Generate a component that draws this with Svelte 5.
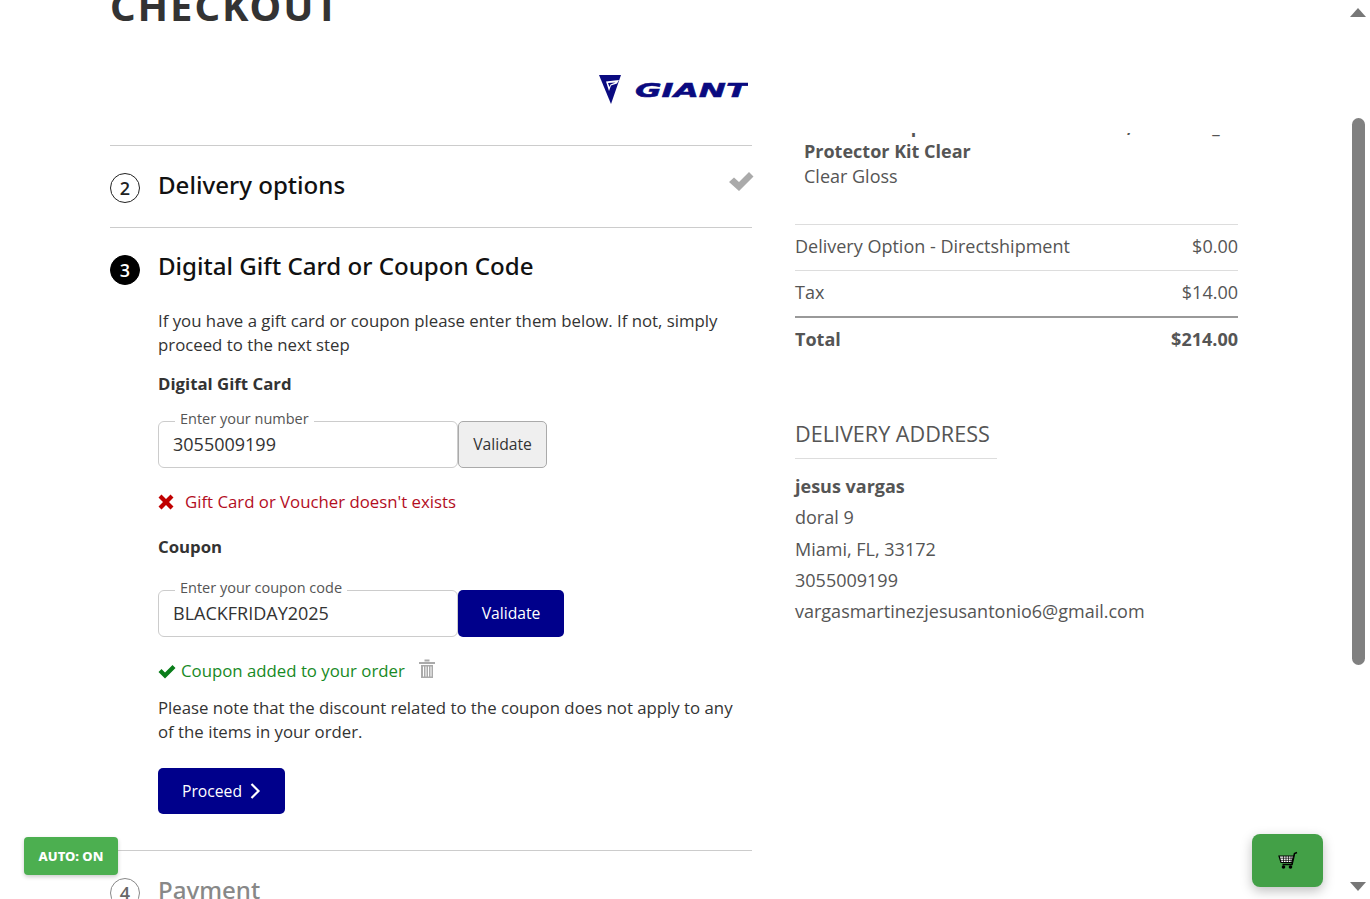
<script>
  let giftNumber = "3055009199";
  let couponCode = "BLACKFRIDAY2025";
</script>

<div class="page">
  <div class="content">
    <h1>CHECKOUT</h1>

    <div class="columns">
      <section class="steps">
        <div class="logo">
          <svg width="150" height="30" viewBox="0 0 150 30">
            <polygon points="1,1 23,1 13,30" fill="#0a0a80" />
            <polygon points="21,6 8,7.500 11,17 13,11.500 19,9.500" fill="#fff" />
            <polygon points="10,9 17.500,8.500 12.500,10.500 11.500,13" fill="#0a0a80" />
            <text x="37" y="23" textLength="113" lengthAdjust="spacingAndGlyphs" class="wordmark">GIANT</text>
          </svg>
        </div>

        <div class="step done">
          <span class="num">2</span>
          <h2>Delivery options</h2>
          <svg class="tick" width="26" height="22" viewBox="0 0 26 22">
            <path d="M1 11l5-4.500 5 4.500L21 1l4.500 4.500L11 20z" fill="#aaa" />
          </svg>
        </div>

        <div class="step-open">
          <div class="step-head">
            <span class="num filled">3</span>
            <h2>Digital Gift Card or Coupon Code</h2>
          </div>
          <div class="step-body">
            <p class="intro">If you have a gift card or coupon please enter them below. If not, simply proceed to the next step</p>

            <h3>Digital Gift Card</h3>
            <div class="field-row">
              <fieldset class="field">
                <legend>Enter your number</legend>
                <input type="text" bind:value={giftNumber} />
              </fieldset>
              <button class="btn-grey">Validate</button>
            </div>
            <div class="msg error">
              <svg width="16" height="16" viewBox="0 0 16 16">
                <path d="M3.500 0.500L8 5 12.500 0.500 15.500 3.500 11 8 15.500 12.500 12.500 15.500 8 11 3.500 15.500 0.500 12.500 5 8 0.500 3.500z" fill="#c00000" />
              </svg>
              <span>Gift Card or Voucher doesn't exists</span>
            </div>

            <h3 class="coupon-title">Coupon</h3>
            <div class="field-row second">
              <fieldset class="field">
                <legend>Enter your coupon code</legend>
                <input type="text" bind:value={couponCode} />
              </fieldset>
              <button class="btn-navy wide">Validate</button>
            </div>
            <div class="msg ok">
              <svg width="18" height="15" viewBox="0 0 18 15">
                <path d="M0.500 8l3-3 3.500 3.500L14.500 1l3 3L7 14.500z" fill="#0a7d1a" />
              </svg>
              <span>Coupon added to your order</span>
              <svg class="trash" width="18" height="22" viewBox="0 0 18 22">
                <path d="M6.500 2.500h5M1 5h16" stroke="#aaa" stroke-width="2" fill="none" />
                <path d="M3 7h12v13H3z" fill="#aaa" />
                <path d="M5.500 8.500v10M8 8.500v10M10.500 8.500v10M13 8.500v10" stroke="#fff" stroke-width="1" />
              </svg>
            </div>
            <p class="note">Please note that the discount related to the coupon does not apply to any of the items in your order.</p>
            <button class="btn-navy proceed">
              Proceed
              <svg width="12" height="18" viewBox="0 0 12 18">
                <path d="M2.500 2l7 7-7 7" stroke="#fff" stroke-width="2.200" fill="none" />
              </svg>
            </button>
          </div>
        </div>

        <div class="step pending">
          <span class="num">4</span>
          <h2>Payment</h2>
        </div>
      </section>

      <aside class="summary">
        <div class="item">
          <div class="clipped">
            <strong class="cut-line">Giant Chomp Shield Tube Armor Kit, Bike Ad _</strong>
          </div>
          <strong>Protector Kit Clear</strong>
          <span>Clear Gloss</span>
        </div>
        <div class="line"><span>Delivery Option - Directshipment</span><span>$0.00</span></div>
        <div class="line"><span>Tax</span><span>$14.00</span></div>
        <div class="line total"><span>Total</span><span>$214.00</span></div>

        <h4>DELIVERY ADDRESS</h4>
        <address>
          <strong>jesus vargas</strong>
          <span>doral 9</span>
          <span>Miami, FL, 33172</span>
          <span>3055009199</span>
          <span>vargasmartinezjesusantonio6@gmail.com</span>
        </address>
      </aside>
    </div>
  </div>

  <div class="scrollbar">
    <i class="arrow up"></i>
    <div class="track"><div class="thumb"></div></div>
    <i class="arrow down"></i>
  </div>

  <button class="auto">AUTO: ON</button>
  <button class="cart" aria-label="Cart">
    <svg width="20" height="19" viewBox="0 0 20 19">
      <path d="M19 1.500l-2.500 1L14 13.500H4.500" stroke="#000" stroke-width="1.600" fill="none" />
      <path d="M1 5h14.500l-1.500 6.500H3z" fill="#fff" stroke="#000" stroke-width="1.200" />
      <path d="M2 7.200h13M2.700 9.400h11.800M5.500 5v6.500M8 5v6.500M10.500 5v6.500M13 5v6.500" stroke="#000" stroke-width="0.700" />
      <circle cx="5.500" cy="16" r="1.800" fill="#000" />
      <circle cx="12.500" cy="16" r="1.800" fill="#000" />
    </svg>
  </button>
</div>

<style>
  :global(body) {
    margin: 0;
    background: #fff;
    font-family: "Open Sans", sans-serif;
    color: #333;
  }
  .page {
    position: relative;
    height: 899px;
    overflow: hidden;
    background: #fff;
  }
  .content {
    margin-top: -14px;
    padding-left: 110px;
  }
  h1 {
    margin: 0;
    height: 40px;
    font-family: "Noto Sans", sans-serif;
    font-size: 40px;
    font-weight: 700;
    line-height: 40px;
    letter-spacing: 1.900px;
    color: #333;
  }
  .columns {
    display: flex;
    gap: 43px;
    align-items: flex-start;
  }
  .steps { width: 642px; }
  .logo {
    display: flex;
    justify-content: flex-end;
    height: 71px;
    padding: 48px 4px 0 0;
  }
  .wordmark {
    font-family: "DejaVu Sans", sans-serif;
    font-weight: 700;
    font-style: italic;
    font-size: 20px;
    fill: #0a0a80;
    stroke: #0a0a80;
    stroke-width: 0.500px;
  }
  .step {
    display: flex;
    align-items: center;
    gap: 18px;
    border-top: 1px solid #ccc;
    height: 81px;
    position: relative;
  }
  h2 {
    margin: 0;
    font-family: "Noto Sans", sans-serif;
    font-size: 24.100px;
    font-weight: 500;
    line-height: 32px;
    color: #111;
  }
  .done h2 { margin-top: -3px; }
  .num {
    width: 28px;
    height: 28px;
    flex: none;
    border: 1px solid #222;
    border-radius: 50%;
    display: flex;
    align-items: center;
    justify-content: center;
    font-weight: 600;
    font-size: 18px;
    color: #222;
    margin-top: 3px;
  }
  .num.filled { background: #000; color: #fff; border-color: #000; margin-top: 5px; }
  .tick { position: absolute; right: -2px; top: 25px; }
  .step-open { border-top: 1px solid #ccc; padding-top: 22px; }
  .step-head { display: flex; align-items: flex-start; gap: 18px; }
  .step-body { padding: 24px 0 0 48px; }
  .intro, .note {
    margin: 0;
    font-size: 16.800px;
    line-height: 24px;
    color: #333;
  }
  h3 {
    margin: 15px 0 0;
    font-size: 16.800px;
    line-height: 24px;
    font-weight: 700;
    color: #333;
  }
  .field-row {
    display: flex;
    align-items: flex-end;
    margin-top: 16px;
  }
  .field-row.second { margin-top: 22px; }
  .field {
    width: 300px;
    height: 56px;
    box-sizing: border-box;
    margin: 0;
    padding: 0 14px;
    border: 1px solid #ccc;
    border-radius: 6px;
  }
  legend {
    position: relative;
    top: -2px;
    padding: 0 5px;
    margin-left: 2px;
    font-size: 14.500px;
    line-height: 18px;
    color: #555;
  }
  input {
    width: 100%;
    border: 0;
    outline: 0;
    padding: 0;
    background: none;
    font: 18px/26px "Open Sans", sans-serif;
    color: #333;
    margin-top: 1px;
  }
  .btn-grey, .btn-navy {
    height: 47px;
    padding: 0 0 2px;
    font-family: "Open Sans", sans-serif;
    font-size: 15.700px;
    border-radius: 5px;
    cursor: pointer;
  }
  .btn-grey {
    width: 89px;
    background: #efefef;
    border: 1px solid #aaa;
    color: #333;
  }
  .btn-navy {
    background: #00008b;
    border: 0;
    color: #fff;
  }
  .wide { width: 106px; }
  .msg {
    display: flex;
    align-items: center;
    font-size: 16.800px;
    line-height: 24px;
  }
  .error { color: #b30d1e; margin-top: 22px; gap: 11px; }
  .ok { color: #178a25; margin-top: 22px; gap: 5px; }
  .trash { margin-left: 8px; margin-top: -4px; }
  .coupon-title { margin-top: 21px; }
  .note { margin-top: 13px; }
  .proceed {
    margin-top: 24px;
    width: 127px;
    height: 46px;
    padding: 0;
    display: flex;
    align-items: center;
    justify-content: center;
    gap: 7px;
  }
  .pending {
    margin-top: 36px;
    align-items: flex-start;
    padding-top: 23px;
    height: 60px;
  }
  .pending h2 { color: #888; }
  .pending .num { border-color: #888; color: #666; margin-top: 4px; }

  .summary {
    width: 443px;
    padding-top: 107px;
    font-size: 18px;
    color: #555;
  }
  .item {
    display: flex;
    flex-direction: column;
    padding: 0 0 35px 9px;
    line-height: 25px;
  }
  .clipped {
    height: 6px;
    overflow: hidden;
    position: relative;
  }
  .cut-line {
    position: absolute;
    bottom: 0;
    left: 0;
    white-space: nowrap;
    word-spacing: 1px;
  }
  .line {
    display: flex;
    justify-content: space-between;
    border-top: 1px solid #ddd;
    height: 45px;
    line-height: 42px;
  }
  .line.total {
    border-top: 2px solid #999;
    font-weight: 700;
  }
  h4 {
    margin: 56px 0 0;
    width: 202px;
    padding-bottom: 9px;
    border-bottom: 1px solid #ddd;
    font-size: 21.600px;
    font-weight: 400;
    line-height: 30px;
    color: #555;
  }
  address {
    display: flex;
    flex-direction: column;
    font-style: normal;
    margin-top: 12px;
    line-height: 31.300px;
  }

  .scrollbar {
    position: absolute;
    top: 0;
    right: 4px;
    width: 16px;
    height: 899px;
    display: flex;
    flex-direction: column;
    align-items: center;
  }
  .arrow {
    width: 0;
    height: 0;
    border-left: 8px solid transparent;
    border-right: 8px solid transparent;
  }
  .arrow.up { margin-top: 8px; border-bottom: 9px solid #777; }
  .arrow.down { margin-bottom: 8px; border-top: 9px solid #777; }
  .track { flex: 1; width: 100%; }
  .thumb {
    width: 13px;
    height: 547px;
    margin: 101px 0 0 2px;
    background: #808080;
    border-radius: 7px;
  }

  .auto {
    position: absolute;
    left: 24px;
    top: 837px;
    width: 94px;
    height: 38px;
    background: #4caf50;
    color: #fff;
    border: 0;
    border-radius: 4px;
    font-family: "Noto Sans", sans-serif;
    font-weight: 800;
    font-size: 13px;
    box-shadow: 0 2px 4px rgba(0,0,0,0.2);
  }
  .cart {
    position: absolute;
    left: 1252px;
    top: 834px;
    width: 71px;
    height: 53px;
    background: #43a047;
    border: 0;
    border-radius: 8px;
    display: flex;
    align-items: center;
    justify-content: center;
    box-shadow: 0 4px 12px rgba(0,0,0,0.25);
  }
</style>
